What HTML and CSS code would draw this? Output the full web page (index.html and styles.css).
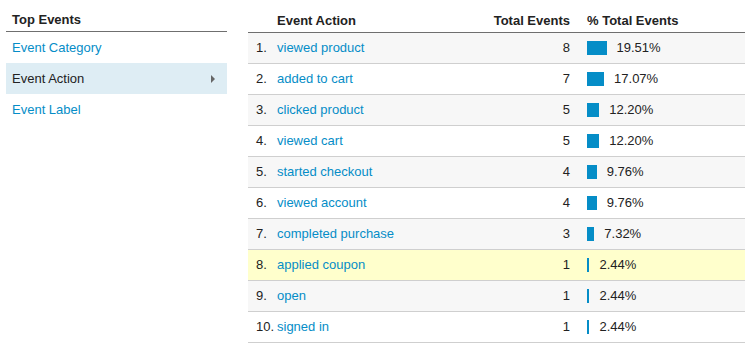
FILE: index.html
```html
<!DOCTYPE html>
<html>
<head>
<meta charset="utf-8">
<link rel="stylesheet" href="styles.css">
</head>
<body>
<div class="page">
  <div class="side">
    <div class="side-head">Top Events</div>
    <div class="side-item"><a class="link">Event Category</a></div>
    <div class="side-item active"><span>Event Action</span><span class="tri"></span></div>
    <div class="side-item"><a class="link">Event Label</a></div>
  </div>
  <table class="data">
    <thead>
      <tr>
        <th class="num"></th>
        <th class="action">Event Action</th>
        <th class="total">Total Events</th>
        <th class="pct">% Total Events</th>
      </tr>
    </thead>
    <tbody>
      <tr class="odd"><td class="num">1.</td><td class="action"><a class="link">viewed product</a></td><td class="total">8</td><td class="pct"><span class="bar" style="width:19.51px"></span>19.51%</td></tr>
      <tr><td class="num">2.</td><td class="action"><a class="link">added to cart</a></td><td class="total">7</td><td class="pct"><span class="bar" style="width:17.07px"></span>17.07%</td></tr>
      <tr class="odd"><td class="num">3.</td><td class="action"><a class="link">clicked product</a></td><td class="total">5</td><td class="pct"><span class="bar" style="width:12.2px"></span>12.20%</td></tr>
      <tr><td class="num">4.</td><td class="action"><a class="link">viewed cart</a></td><td class="total">5</td><td class="pct"><span class="bar" style="width:12.2px"></span>12.20%</td></tr>
      <tr class="odd"><td class="num">5.</td><td class="action"><a class="link">started checkout</a></td><td class="total">4</td><td class="pct"><span class="bar" style="width:9.76px"></span>9.76%</td></tr>
      <tr><td class="num">6.</td><td class="action"><a class="link">viewed account</a></td><td class="total">4</td><td class="pct"><span class="bar" style="width:9.76px"></span>9.76%</td></tr>
      <tr class="odd"><td class="num">7.</td><td class="action"><a class="link">completed purchase</a></td><td class="total">3</td><td class="pct"><span class="bar" style="width:7.32px"></span>7.32%</td></tr>
      <tr class="hover"><td class="num">8.</td><td class="action"><a class="link">applied coupon</a></td><td class="total">1</td><td class="pct"><span class="bar" style="width:2.44px"></span>2.44%</td></tr>
      <tr class="odd"><td class="num">9.</td><td class="action"><a class="link">open</a></td><td class="total">1</td><td class="pct"><span class="bar" style="width:2.44px"></span>2.44%</td></tr>
      <tr><td class="num">10.</td><td class="action"><a class="link">signed in</a></td><td class="total">1</td><td class="pct"><span class="bar" style="width:2.44px"></span>2.44%</td></tr>
    </tbody>
  </table>
</div>
</body>
</html>
```

FILE: styles.css
```css
html, body {
  margin: 0;
  padding: 0;
  background: #fff;
}
body {
  font-family: "Liberation Sans", Arial, sans-serif;
  font-size: 13px;
  color: #222;
}
.page {
  display: flex;
  align-items: flex-start;
  padding-left: 6px;
  gap: 21px;
}
.link {
  color: #058dc7;
  text-decoration: none;
}
.side {
  width: 221px;
  flex: none;
}
.side-head {
  box-sizing: border-box;
  padding: 12px 6px 0;
  font-weight: bold;
  border-bottom: 1px solid #6f6f6f;
  line-height: 16px;
  height: 32px;
}
.side-item {
  height: 31px;
  display: flex;
  align-items: center;
  justify-content: space-between;
  padding: 0 12px 0 6px;
}
.side-item.active {
  background: #deedf4;
  color: #222;
}
.tri {
  width: 0;
  height: 0;
  border-top: 4px solid transparent;
  border-bottom: 4px solid transparent;
  border-left: 4px solid #666;
}
.data {
  width: 497px;
  border-collapse: collapse;
  flex: none;
}
.data th {
  font-weight: bold;
  text-align: left;
  height: 32px;
  box-sizing: border-box;
  padding: 12px 0 3px;
  line-height: 16px;
  border-bottom: 1px solid #6f6f6f;
  vertical-align: bottom;
  white-space: nowrap;
}
.data td {
  height: 30px;
  padding: 0;
  border-bottom: 1px solid #cfcfcf;
  vertical-align: middle;
  white-space: nowrap;
  line-height: 16px;
}
.data tr.odd td { background: #f7f7f7; }
.data tr.hover td { background: #ffffcc; }
.data .num {
  width: 21px;
  padding-left: 8px;
}
.data .total {
  text-align: right;
  padding-right: 17px;
}
.data th.total { text-align: right; }
.data .pct {
  width: 158px;
}
.bar {
  display: inline-block;
  height: 14px;
  background: #058dc7;
  vertical-align: -3px;
  margin-right: 10px;
}
```
